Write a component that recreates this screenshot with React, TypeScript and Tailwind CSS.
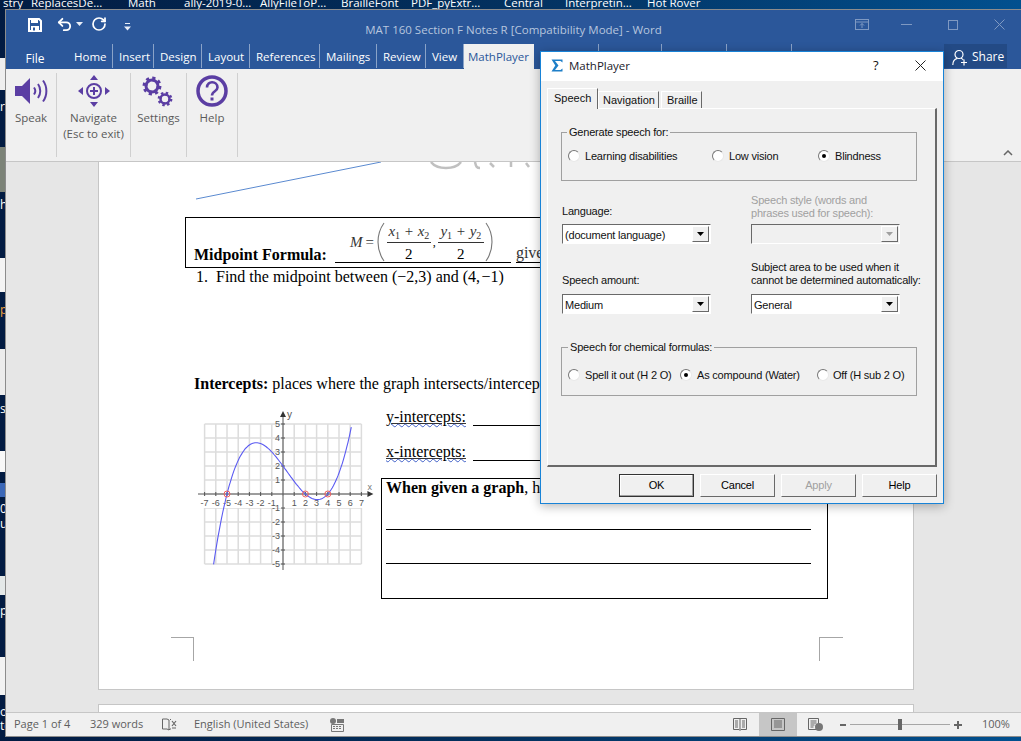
import { RotateCw, Undo2 } from 'lucide-react'

const purple = '#5b3ea3'

const desktopLabels = [
  { text: 'stry', cls: 'w-[28px]' },
  { text: 'ReplacesDe...', cls: 'w-[97px]' },
  { text: 'Math', cls: 'w-[56px]' },
  { text: 'ally-2019-0...', cls: 'w-[76px]' },
  { text: 'AllyFileToP...', cls: 'w-[81px]' },
  { text: 'BrailleFont', cls: 'w-[70px]' },
  { text: 'PDF_pyExtr...', cls: 'w-[93px]' },
  { text: 'Central', cls: 'w-[61px]' },
  { text: 'Interpretin...', cls: 'w-[82px]' },
  { text: 'Hot Rover', cls: 'w-[80px]' },
]

// bits of other windows and icon labels showing down the left edge
const leftEdge = [
  { text: '', cls: 'h-[49px]' },
  { text: '', cls: 'h-[32px] bg-[#eeeeee]' },
  { text: '', cls: 'h-[10px]' },
  { text: 'r', cls: 'h-[14px] text-white' },
  { text: '', cls: 'h-[33px]' },
  { text: '', cls: 'h-[45px] bg-[#7c8378]' },
  { text: '', cls: 'h-[6px]' },
  { text: 'h', cls: 'h-[14px] text-white' },
  { text: '', cls: 'h-[46px]' },
  { text: '', cls: 'h-[34px] bg-[#f4f4f4]' },
  { text: '', cls: 'h-[11px]' },
  { text: 'p', cls: 'h-[14px] text-[#f0a040]' },
  { text: '', cls: 'h-[32px]' },
  { text: '', cls: 'h-[46px] bg-[#ececec]' },
  { text: '', cls: 'h-[7px]' },
  { text: 's', cls: 'h-[14px] text-white' },
  { text: '', cls: 'h-[35px]' },
  { text: '', cls: 'h-[21px] bg-[#f8f8f8]' },
  { text: '', cls: 'h-[11px]' },
  { text: '', cls: 'h-[14px] bg-[#3c68b8]' },
  { text: '', cls: 'h-[5px]' },
  { text: '0', cls: 'h-[15px] text-white' },
  { text: 'u', cls: 'h-[15px] text-white' },
  { text: '', cls: 'h-[44px]' },
  { text: '', cls: 'h-[19px] bg-[#e4e8e8]' },
  { text: '', cls: 'h-[9px]' },
  { text: 'p', cls: 'h-[14px] text-white' },
  { text: '', cls: 'h-[39px]' },
  { text: '', cls: 'h-[38px] bg-[#f2f2f2]' },
  { text: '', cls: 'h-[10px]' },
  { text: 'o', cls: 'h-[14px] text-white' },
  { text: 'te', cls: 'h-[14px] text-white' },
]

const wordTabs = [
  { text: 'Home', cls: 'w-[45px]' },
  { text: 'Insert', cls: 'w-[41px]' },
  { text: 'Design', cls: 'w-[48px]' },
  { text: 'Layout', cls: 'w-[48px]' },
  { text: 'References', cls: 'w-[70px]' },
  { text: 'Mailings', cls: 'w-[57px]' },
  { text: 'Review', cls: 'w-[49px]' },
  { text: 'View', cls: 'w-[38px]' },
]

function TitleBar() {
  return (
    <div className="h-[34px] flex items-center bg-[#2b579a] relative shrink-0">
      <svg width="14" height="14" viewBox="0 0 14 14" className="ml-[22px] mt-[-4px]">
        <path d="M1 1h10l2 2v10H1z" fill="none" stroke="white" strokeWidth="2" />
        <rect x="3" y="1" width="7" height="4" fill="white" />
        <rect x="3" y="8" width="8" height="5" fill="white" />
        <rect x="5" y="9.500" width="2" height="3" fill="#2b579a" />
      </svg>
      <Undo2 size={17} color="white" strokeWidth={2.6} className="ml-[14px] mt-[-6px]" />
      <svg width="7" height="4" viewBox="0 0 7 4" className="ml-[3px] mt-[-6px]">
        <path d="M0 0h7l-3.500 4z" fill="#e8eef8" />
      </svg>
      <RotateCw size={16} color="white" strokeWidth={2.6} className="ml-[8px] mt-[-6px]" />
      <svg width="7" height="8" viewBox="0 0 7 8" className="ml-[17px] mt-[-1px]">
        <path d="M1 .5h5" stroke="#e8eef8" />
        <path d="M0 3.500h7l-3.500 4z" fill="#e8eef8" />
      </svg>
      <div className="absolute left-0 right-0 top-[12px] text-center text-[11.5px] leading-[16px] text-[#b7c6de] font-['Open_Sans',sans-serif]">
        MAT 160 Section F Notes R [Compatibility Mode] - Word
      </div>
      <svg width="14" height="11" viewBox="0 0 14 11" className="ml-auto mt-[-5px] mr-[32px]">
        <rect x=".5" y=".5" width="13" height="10" fill="none" stroke="#7f99c2" />
        <path d="M.5 3h13M7 9V4.500M5 6.500l2-2 2 2" fill="none" stroke="#7f99c2" />
      </svg>
      <svg width="11" height="11" viewBox="0 0 11 11" className="mt-[-5px] mr-[36px]">
        <path d="M0 5.500h11" stroke="#7f99c2" />
      </svg>
      <svg width="10" height="10" viewBox="0 0 10 10" className="mt-[-5px] mr-[36px]">
        <rect x=".5" y=".5" width="9" height="9" fill="none" stroke="#7f99c2" />
      </svg>
      <svg width="11" height="11" viewBox="0 0 11 11" className="mt-[-5px] mr-[16px]">
        <path d="M.5 .5l10 10M10.500 .5l-10 10" stroke="#7f99c2" />
      </svg>
    </div>
  )
}

function TabRow() {
  return (
    <div className="h-[25px] flex items-end bg-[#2b579a] text-[11.5px] text-white font-['Open_Sans',sans-serif] shrink-0">
      <div className="w-[62px] h-[24px] leading-[27px] text-center pr-[4px] text-[12px]">File</div>
      {wordTabs.map(t => (
        <div key={t.text} className={`${t.cls} h-[24px] leading-[26px] pl-[6px] border-r border-[#8aa3c8] whitespace-nowrap mb-[1px]`}>
          {t.text}
        </div>
      ))}
      <div className="w-[70px] h-[25px] leading-[26px] pl-[4px] bg-[#f0f0f0] text-[#2b579a] whitespace-nowrap">MathPlayer</div>
      <div className="w-[65px] h-[24px] border-r border-[#8aa3c8] mb-[1px]" />
      <div className="w-[63px] h-[24px] border-r border-[#8aa3c8] mb-[1px]" />
      <div className="w-[65px] h-[24px] border-r border-[#8aa3c8] mb-[1px]" />
      <div className="w-[65px] h-[24px] border-r border-[#8aa3c8] mb-[1px]" />
      <div className="ml-auto mr-[14px] w-[63px] h-[24px] mb-[1px] pt-[2px] bg-[#234a85] flex items-center pl-[8px] gap-[4px] text-[12px]">
        <svg width="16" height="17" viewBox="0 0 16 17" fill="none" stroke="white" strokeWidth="1.200">
          <circle cx="7" cy="5.500" r="4" />
          <path d="M.8 16c0-3.500 2-6 4.500-6.700M9 9.300c1 .3 1.700 .8 2.300 1.500" />
          <path d="M12 10.500v6M9 13.500h6" />
        </svg>
        Share
      </div>
    </div>
  )
}

function Gear({ cx, cy, r, w }: { cx: number; cy: number; r: number; w: number }) {
  const c = 2 * Math.PI * (r + w * 0.35)
  return (
    <g fill="none" stroke={purple}>
      <circle cx={cx} cy={cy} r={r} strokeWidth={w} />
      <circle cx={cx} cy={cy} r={r + w * 0.35} strokeWidth={w * 1.6} strokeDasharray={`${c / 16} ${c / 16}`} />
    </g>
  )
}

function Ribbon() {
  return (
    <div className="h-[93px] shrink-0 flex bg-[#f0f0f0] border-b border-[#c6c6c6] pt-[4px] text-[11.5px] leading-[16px] text-[#5a5a5a] font-['Open_Sans',sans-serif] text-center relative">
      <div className="w-[51px] h-[84px] border-r border-[#d0d0d0] pt-[2px]">
        <svg width="34" height="32" viewBox="0 0 34 32" className="ml-[8px] mb-[3px]">
          <path d="M1 11h7l8-8v26l-8-8H1z" fill={purple} />
          <path d="M20 12.500c1.500 2 1.500 5 0 7M24 9c3 4 3 10 0 14M29 5.500c4.500 6 4.500 15 0 21" fill="none" stroke={purple} strokeWidth="2" />
        </svg>
        Speak
      </div>
      <div className="w-[74px] h-[84px] border-r border-[#d0d0d0] pt-[2px]">
        <svg width="32" height="32" viewBox="0 0 32 32" className="mx-auto mb-[3px]">
          <circle cx="16" cy="16" r="7" fill="none" stroke={purple} strokeWidth="2" />
          <path d="M16 12v8M12 16h8" stroke={purple} strokeWidth="2" />
          <path d="M16 0l4 5h-8zM16 32l-4-5h8zM0 16l5-4v8zM32 16l-5 4v-8z" fill={purple} />
        </svg>
        Navigate
        <br />
        (Esc to exit)
      </div>
      <div className="w-[56px] h-[84px] border-r border-[#d0d0d0] pt-[2px]">
        <svg width="34" height="32" viewBox="0 0 34 32" className="ml-[10px] mb-[3px]">
          <Gear cx={11} cy={11} r={6} w={3} />
          <Gear cx={24} cy={24} r={4.500} w={2.500} />
        </svg>
        Settings
      </div>
      <div className="w-[51px] h-[84px] border-r border-[#d0d0d0] pt-[2px]">
        <svg width="32" height="32" viewBox="0 0 32 32" className="mx-auto mb-[3px]">
          <circle cx="16" cy="16" r="14" fill="none" stroke={purple} strokeWidth="3.500" />
          <path d="M11 12.500c0-7.500 10.500-6.500 10.500 0 0 4-5.500 3.500-5.500 8" fill="none" stroke={purple} strokeWidth="2.600" />
          <rect x="14.500" y="22.500" width="3" height="3" fill={purple} />
        </svg>
        Help
      </div>
      <svg width="10" height="6" viewBox="0 0 10 6" className="absolute right-[8px] bottom-[5px]">
        <path d="M1 5l4-4 4 4" fill="none" stroke="#666" strokeWidth="1.500" />
      </svg>
    </div>
  )
}

function Frac({ top, bottom, cls }: { top: React.ReactNode; bottom: string; cls: string }) {
  return (
    <span className={`inline-flex flex-col items-center ${cls}`}>
      <span className="h-[20px] leading-[17px] italic whitespace-nowrap border-b border-[#333] w-full text-center text-[#333]">{top}</span>
      <span className="h-[19px] leading-[22px]">{bottom}</span>
    </span>
  )
}

function Paren({ flip }: { flip?: boolean }) {
  return (
    <svg width="8" height="40" viewBox="0 0 8 40" className={flip ? 'scale-x-[-1]' : ''}>
      <path d="M7 1C2 8 1 14 1 20s1 12 6 19" fill="none" stroke="#777" strokeWidth="1.100" />
    </svg>
  )
}

function Sub({ n }: { n: number }) {
  return <sub className="text-[10px] not-italic align-baseline relative top-[3px]">{n}</sub>
}

function FormulaBox() {
  return (
    <div className="h-[51px] w-[590px] border border-black flex items-end text-[16px] leading-[18px] text-black overflow-hidden">
      <b className="ml-[8px] mb-[3px] whitespace-nowrap">Midpoint Formula:</b>
      <div className="ml-[8px] mb-[4px] border-b border-black h-[41px] w-[176px] flex items-end pl-[15px]">
        <span className="italic text-[#333] mb-[11px] text-[15px]">M</span>
        <span className="ml-[3px] mb-[11px] text-[15px] text-[#333]">=</span>
        <span className="ml-[3px] flex items-center"><Paren /></span>
        <Frac cls="w-[44px] ml-[2px] text-[15px]" top={<>x<Sub n={1} /> + x<Sub n={2} /></>} bottom="2" />
        <span className="mx-[2px] mb-[11px] text-[12px]">,</span>
        <Frac cls="w-[46px] text-[15px]" top={<>y<Sub n={1} /> + y<Sub n={2} /></>} bottom="2" />
        <span className="ml-[1px] flex items-center"><Paren flip /></span>
      </div>
      <span className="ml-[5px] mb-[4px] border-b border-black whitespace-nowrap text-[#333] leading-[18px]">gives the midpoint of a segment</span>
    </div>
  )
}

function Graph() {
  const ux = 11.2
  const uy = 14
  const ox = 87
  const oy = 86
  const px = (x: number) => ox + x * ux
  const py = (y: number) => oy - y * uy
  const xs = [-7, -6, -5, -4, -3, -2, -1, 1, 2, 3, 4, 5, 6, 7]
  const ys = [-5, -4, -3, -2, -1, 1, 2, 3, 4, 5]
  const pts: string[] = []
  for (let x = -6.2; x <= 6.16; x += 0.1) {
    const y = 0.05 * (x + 5) * (x - 2) * (x - 4)
    pts.push(`${px(x).toFixed(1)},${py(y).toFixed(1)}`)
  }
  return (
    <svg width="180" height="166" viewBox="0 0 180 166" className="ml-[11px] shrink-0 font-['Liberation_Sans',sans-serif]">
      {xs.concat(0).map(x => (
        <path key={x} d={`M${px(x)} ${py(5)}V${py(-5)}`} stroke="#dcdcdc" strokeWidth="1.500" />
      ))}
      {ys.concat(0).map(y => (
        <path key={y} d={`M${px(-7)} ${py(y)}H${px(7)}`} stroke="#dcdcdc" strokeWidth="1.500" />
      ))}
      <rect x={px(-7) - 2} y={oy + 2} width="164" height="12" fill="white" />
      <path d={`M2 ${oy}H${px(7) + 6}`} stroke="#555" />
      <path d={`M${ox} 8V${py(-5) + 6}`} stroke="#555" />
      <path d={`M${px(7) + 12} ${oy}l-6 -3v6zM${ox} 3l-3 6h6z`} fill="#333" />
      {xs.map(x => (
        <path key={x} d={`M${px(x)} ${oy - 2}v4`} stroke="#555" />
      ))}
      {ys.map(y => (
        <path key={y} d={`M${ox - 2} ${py(y)}h4`} stroke="#555" />
      ))}
      {xs.map(x => (
        <text key={x} x={px(x)} y={oy + 12} fontSize="9" fill="#555" textAnchor="middle">{x}</text>
      ))}
      {ys.map(y => (
        <text key={y} x={ox - 3} y={py(y) + 3} fontSize="9" fill="#555" textAnchor="end">{y}</text>
      ))}
      <text x={ox + 4} y="10" fontSize="10" fill="#555">y</text>
      <text x={px(7) + 6} y={oy - 4} fontSize="9" fill="#777">x</text>
      <polyline points={pts.join(' ')} fill="none" stroke="#5a5af2" strokeWidth="1.100" />
      {[-5, 2, 4].map(x => (
        <circle key={x} cx={px(x)} cy={oy} r="3" fill="none" stroke="#f06060" />
      ))}
    </svg>
  )
}

function Intercept({ label, cls }: { label: string; cls: string }) {
  return (
    <div className={`h-[20px] flex items-end ${cls}`}>
      <span className="ml-[5px] underline underline-offset-1 decoration-[#333]">
        <span className="underline decoration-wavy decoration-1 decoration-[#4060c8]">{label}</span>
      </span>
      <span className="ml-[7px] mb-[3px] w-[160px] border-b border-black" />
    </div>
  )
}

function Page() {
  return (
    <div className="w-[816px] h-[528px] shrink-0 bg-white border-x border-b border-[#c6c6c6] pl-[86px] font-['Liberation_Serif',serif] text-[16px] text-black">
      <svg width="400" height="55" viewBox="0 0 400 55" className="block">
        <path d="M11 37L196 0" stroke="#5b8ad0" strokeWidth="1" />
        <path d="M246 0c6 8 24 8 30 0M290 0c1 5 2 6 5 6M305 1l4 4M326 0v5M341 1l3 4" fill="none" stroke="#c0c0c0" strokeWidth="2.500" />
      </svg>
      <FormulaBox />
      <div className="h-[18px] pl-[11px] leading-[18px] whitespace-pre">1.  Find the midpoint between (−2,3) and (4,{'\u200a'}−1)</div>
      <div className="mt-[89px] h-[18px] pl-[9px] leading-[18px] whitespace-nowrap">
        <b>Intercepts:</b> places where the graph intersects/intercepts the axes
      </div>
      <div className="mt-[15px] flex">
        <Graph />
        <div className="ml-[5px] pt-[1px]">
          <Intercept label="y-intercepts:" cls="" />
          <Intercept label="x-intercepts:" cls="mt-[15px]" />
          <div className="mt-[14px] w-[447px] h-[121px] border border-black pl-[4px] pr-[16px] leading-[18px]">
            <div><b>When given a graph</b>, how do you find the intercepts?</div>
            <div className="mt-[32px] border-b border-black" />
            <div className="mt-[33px] border-b border-black" />
          </div>
        </div>
      </div>
      <div className="mt-[38px] -ml-[14px] w-[672px] flex justify-between">
        <div className="w-[23px] h-[24px] border-t border-r border-[#a6a6a6]" />
        <div className="w-[24px] h-[24px] border-t border-l border-[#a6a6a6]" />
      </div>
    </div>
  )
}

function StatusBar() {
  return (
    <div className="h-[24px] shrink-0 flex items-center bg-[#f0f0f0] border-t border-[#c6c6c6] text-[11px] text-[#5e5e5e] font-['Open_Sans',sans-serif] whitespace-nowrap">
      <span className="ml-[8px] w-[76px]">Page 1 of 4</span>
      <span className="w-[72px]">329 words</span>
      <svg width="15" height="13" viewBox="0 0 15 13" fill="none" stroke="#666">
        <path d="M.5 1h4.500l2 1v10l-2-1H.5zM8 2l1-1M7 12l1-1h1" />
        <path d="M10 3l4 5M14 3l-4 5M10 10h4" strokeWidth="1.200" />
      </svg>
      <span className="ml-[17px] w-[136px]">English (United States)</span>
      <svg width="14" height="14" viewBox="0 0 14 14">
        <circle cx="3" cy="3" r="3" fill="#777" />
        <rect x="7" y="1" width="7" height="4" fill="#777" />
        <path d="M1.500 6.500h12v7h-12z" fill="none" stroke="#777" />
        <path d="M3 8.500h9M3 10.500h9" stroke="#777" strokeDasharray="2 1" />
      </svg>
      <svg width="14" height="13" viewBox="0 0 14 13" fill="none" stroke="#666" className="ml-[389px]">
        <path d="M.5 .5h13v11H8l-1 1-1-1H.5zM7 1v11M2 3h3M2 5h3M2 7h3M2 9h3M9 3h3M9 5h3M9 7h3M9 9h3" />
      </svg>
      <div className="ml-[12px] w-[38px] h-[23px] bg-[#c6c6c6] flex items-center justify-center">
        <svg width="14" height="13" viewBox="0 0 14 13" fill="none" stroke="#666">
          <path d="M.5 .5h13v12H.5zM3 3h8M3 5h8M3 7h8M3 9h8" />
        </svg>
      </div>
      <svg width="15" height="13" viewBox="0 0 15 13" className="ml-[11px]">
        <path d="M.5 .5h10v11H.5zM2.500 3h6M2.500 5h6M2.500 7h4M2.500 9h3" fill="none" stroke="#666" />
        <circle cx="11" cy="9" r="4" fill="#777" />
      </svg>
      <span className="ml-[17px] w-[6px] h-[2px] bg-[#666]" />
      <div className="ml-[4px] w-[100px] h-[1px] bg-[#a6a6a6] flex justify-center items-center">
        <span className="w-[4px] h-[11px] bg-[#666]" />
      </div>
      <svg width="8" height="8" viewBox="0 0 8 8" className="ml-[4px]">
        <path d="M0 4h8M4 0v8" stroke="#666" strokeWidth="2" />
      </svg>
      <span className="ml-[20px]">100%</span>
    </div>
  )
}

function Radio({ checked }: { checked?: boolean }) {
  return (
    <span className="w-[12px] h-[12px] shrink-0 rounded-full bg-white border border-t-[#777] border-l-[#777] border-r-[#e8e8e8] border-b-[#e8e8e8] flex items-center justify-center">
      {checked && <span className="w-[4px] h-[4px] rounded-full bg-black" />}
    </span>
  )
}

function RadioItem({ label, checked, cls, gap }: { label: string; checked?: boolean; cls: string; gap: string }) {
  return (
    <div className={`flex items-center ${cls}`}>
      <Radio checked={checked} />
      <span className={`${gap} whitespace-nowrap`}>{label}</span>
    </div>
  )
}

function Combo({ value, disabled, cls }: { value: string; disabled?: boolean; cls?: string }) {
  return (
    <div className={`${cls ?? ''} w-[149px] h-[20px] border border-t-[#696969] border-l-[#696969] border-r-white border-b-white flex items-center pl-[2px] pr-[1px] ${disabled ? 'bg-[#f0f0f0]' : 'bg-white'}`}>
      <span className="flex-1 whitespace-nowrap mt-[2px]">{value}</span>
      <span className="w-[17px] h-[16px] bg-[#f0f0f0] border border-t-white border-l-white border-r-[#696969] border-b-[#696969] flex items-center justify-center">
        <svg width="7" height="4" viewBox="0 0 7 4">
          <path d="M0 0h7l-3.500 4z" fill={disabled ? '#a0a0a0' : 'black'} />
        </svg>
      </span>
    </div>
  )
}

function FootButton({ label, isDefault, disabled }: { label: string; isDefault?: boolean; disabled?: boolean }) {
  const edge = isDefault
    ? 'border-[#333] shadow-[inset_-1px_-1px_0_#a0a0a0,inset_1px_1px_0_#fff]'
    : 'border-t-white border-l-white border-r-[#696969] border-b-[#696969]'
  return (
    <button className={`w-[75px] h-[23px] border ${edge} ${disabled ? 'text-[#a0a0a0]' : 'text-black'}`}>
      {label}
    </button>
  )
}

function Dialog() {
  return (
    <div className="absolute left-[540px] top-[51px] w-[404px] h-[453px] border border-[#1883d7] bg-[#f0f0f0] shadow-[0_2px_10px_rgba(0,0,0,0.3)] text-[11px] leading-[13px] tracking-[-0.2px] text-[#111] font-['Liberation_Sans',sans-serif]">
      <div className="h-[29px] pb-[2px] bg-white flex items-center pl-[10px] text-[11.5px] tracking-normal font-['Open_Sans',sans-serif]">
        <svg width="12" height="13" viewBox="0 0 12 13">
          <path d="M.5 .5h11v3L9.500 2H4l3.500 4.500L4 11h5.500l2-1.500v3H.5l3.800-6z" fill="#1e7fc8" />
        </svg>
        <span className="ml-[6px] w-[61px] text-[#1a1a2a]">MathPlayer</span>
        <span className="ml-[243px] w-[8px] text-[13px]">?</span>
        <svg width="11" height="11" viewBox="0 0 11 11" className="ml-[34px]">
          <path d="M.5 .5l10 10M10.500 .5l-10 10" stroke="#222" />
        </svg>
      </div>
      <div className="pl-[6px] pt-[7px]">
        <div className="flex items-end h-[20px] tracking-normal">
          <div className="w-[51px] h-[21px] pl-[6px] pt-[3px] bg-[#f0f0f0] border border-b-0 border-t-white border-l-white border-r-[#696969] relative top-[1px] z-10">Speech</div>
          <div className="w-[61px] h-[17px] pl-[4px] pt-[2px] border border-b-0 border-t-white border-l-white border-r-[#696969]">Navigation</div>
          <div className="w-[41px] h-[17px] pl-[5px] pt-[2px] ml-[2px] border border-b-0 border-t-white border-l-white border-r-[#696969]">Braille</div>
        </div>
        <div className="w-[390px] h-[359px] border-l border-t border-white border-r-2 border-b-2 border-r-[#696969] border-b-[#696969] pl-[13px] pt-[16px]">
          <fieldset className="w-[356px] h-[56px] border border-[#a0a0a0]">
            <legend className="ml-[5px] px-[2px] leading-[14px]">Generate speech for:</legend>
            <div className="flex pt-[10px] h-[24px]">
              <RadioItem cls="ml-[6px] w-[144px]" gap="ml-[5px]" label="Learning disabilities" />
              <RadioItem cls="w-[106px]" gap="ml-[5px]" label="Low vision" />
              <RadioItem checked cls="" gap="ml-[5px]" label="Blindness" />
            </div>
          </fieldset>
          <div className="ml-[1px] mt-[13px] grid grid-cols-[189px_170px]">
            <div>
              <div className="h-[26px] flex items-end pb-[2px]">Language:</div>
              <Combo cls="mt-[4px]" value="(document language)" />
            </div>
            <div>
              <div className="h-[26px] text-[#a0a0a0]">Speech style (words and<br />phrases used for speech):</div>
              <Combo cls="mt-[4px]" disabled value="" />
            </div>
            <div className="mt-[17px]">
              <div className="h-[26px] flex items-end">Speech amount:</div>
              <Combo cls="mt-[7px]" value="Medium" />
            </div>
            <div className="mt-[17px]">
              <div className="h-[26px] whitespace-nowrap">Subject area to be used when it<br />cannot be determined automatically:</div>
              <Combo cls="mt-[7px]" value="General" />
            </div>
          </div>
          <fieldset className="mt-[26px] w-[356px] h-[56px] border border-[#a0a0a0]">
            <legend className="ml-[6px] px-[2px] leading-[14px]">Speech for chemical formulas:</legend>
            <div className="flex pt-[14px] h-[28px]">
              <RadioItem cls="ml-[6px] w-[112px]" gap="ml-[5px]" label="Spell it out (H 2 O)" />
              <RadioItem checked cls="w-[137px]" gap="ml-[5px]" label="As compound (Water)" />
              <RadioItem cls="" gap="ml-[4px]" label="Off (H sub 2 O)" />
            </div>
          </fieldset>
        </div>
        <div className="mt-[7px] flex justify-end gap-[6px] pr-[6px]">
          <FootButton label="OK" isDefault />
          <FootButton label="Cancel" />
          <FootButton label="Apply" disabled />
          <FootButton label="Help" />
        </div>
      </div>
    </div>
  )
}

export default function App() {
  return (
    <div className="relative w-[1021px] h-[741px] overflow-hidden bg-gradient-to-r from-[#021b42] via-[#03315f] to-[#01508f] flex flex-col">
      <div className="h-[9px] pl-[3px] shrink-0 flex overflow-hidden text-[11.5px] leading-[12px] text-white font-['Open_Sans',sans-serif] whitespace-nowrap">
        {desktopLabels.map(l => (
          <span key={l.text} className={`${l.cls} shrink-0 mt-[-3px] h-[14px]`}>{l.text}</span>
        ))}
      </div>
      <div className="flex h-[728px] shrink-0">
        <div className="w-[5px] shrink-0 overflow-hidden text-[12px] leading-[14px] font-['Open_Sans',sans-serif]">
          {leftEdge.map((p, i) => (
            <div key={i} className={p.cls}>{p.text}</div>
          ))}
        </div>
        <div className="w-[1016px] flex flex-col border-l border-t border-b border-[#8c8c8c] bg-[#e6e6e6]">
          <TitleBar />
          <TabRow />
          <Ribbon />
          <div className="flex-1 overflow-hidden pl-[92px]">
            <Page />
            <div className="mt-[14px] w-[816px] h-[40px] bg-white border-x border-t border-[#c6c6c6]" />
          </div>
          <StatusBar />
        </div>
      </div>
      <Dialog />
    </div>
  )
}
